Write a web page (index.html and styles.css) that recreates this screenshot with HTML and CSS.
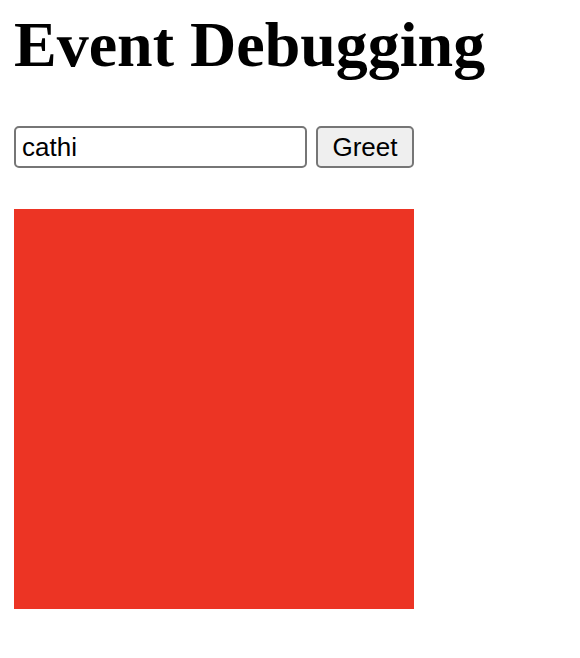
FILE: index.html
```html
<!DOCTYPE html>
<html>
<head>
<meta charset="utf-8">
<link rel="stylesheet" href="styles.css">
</head>
<body>
<h1 class="title">Event Debugging</h1>
<div class="form-row">
  <input class="name-input" type="text" value="cathi">
  <button class="greet-btn">Greet</button>
</div>
<div class="box"></div>
</body>
</html>
```

FILE: styles.css
```css
html, body {
  background: #ffffff;
}
body {
  margin: 8px 14px;
  padding: 0;
}
.title {
  font-family: "Liberation Serif", "Times New Roman", serif;
  font-weight: bold;
  font-size: 64px;
  line-height: 74px;
  margin: 0 0 44px 0;
  color: #000;
}
.form-row {
  display: flex;
  gap: 9px;
  margin-bottom: 41px;
}
.name-input {
  box-sizing: border-box;
  width: 293px;
  height: 42px;
  font-family: "Liberation Sans", Arial, sans-serif;
  font-size: 26px;
  padding: 0 6px;
  border: 2px solid #767676;
  border-radius: 5px;
  color: #000;
  background: #fff;
  outline: none;
}
.greet-btn {
  box-sizing: border-box;
  width: 98px;
  height: 42px;
  font-family: "Liberation Sans", Arial, sans-serif;
  font-size: 26px;
  padding: 0;
  border: 2px solid #767676;
  border-radius: 5px;
  background: #efefef;
  color: #000;
}
.box {
  width: 400px;
  height: 400px;
  background: #ec3424;
}
```
